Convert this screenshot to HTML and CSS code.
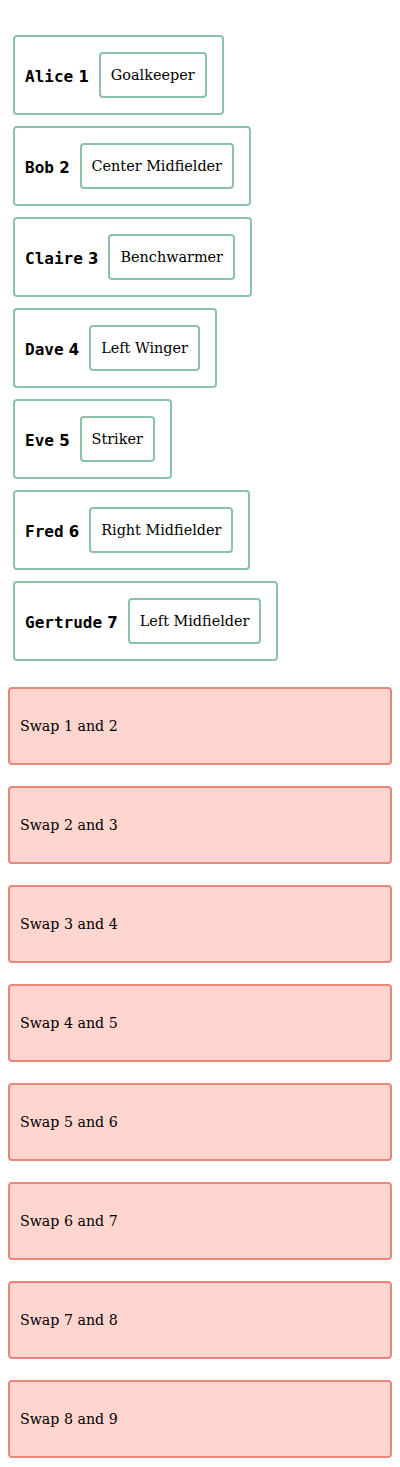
FILE: index.html
```html
<!DOCTYPE html>
<html>
<head>
<meta charset="utf-8">
<link rel="stylesheet" href="styles.css">
</head>
<body>
<div class="roster">
  <div class="card"><span class="name"><code>Alice</code> 1</span><span class="role">Goalkeeper</span></div>
  <div class="card"><span class="name"><code>Bob</code> 2</span><span class="role">Center Midfielder</span></div>
  <div class="card"><span class="name"><code>Claire</code> 3</span><span class="role">Benchwarmer</span></div>
  <div class="card"><span class="name"><code>Dave</code> 4</span><span class="role">Left Winger</span></div>
  <div class="card"><span class="name"><code>Eve</code> 5</span><span class="role">Striker</span></div>
  <div class="card"><span class="name"><code>Fred</code> 6</span><span class="role">Right Midfielder</span></div>
  <div class="card"><span class="name"><code>Gertrude</code> 7</span><span class="role">Left Midfielder</span></div>
</div>
<div class="swaps">
  <div class="swap">Swap 1 and 2</div>
  <div class="swap">Swap 2 and 3</div>
  <div class="swap">Swap 3 and 4</div>
  <div class="swap">Swap 4 and 5</div>
  <div class="swap">Swap 5 and 6</div>
  <div class="swap">Swap 6 and 7</div>
  <div class="swap">Swap 7 and 8</div>
  <div class="swap">Swap 8 and 9</div>
</div>
</body>
</html>
```
FILE: styles.css
```css
body {
  margin: 8px;
  font-family: "DejaVu Serif", serif;
  font-size: 14px;
  color: #000;
  background: #fff;
}
.roster {
  display: flex;
  flex-direction: column;
  align-items: flex-start;
  gap: 11px;
  padding: 27px 0 0 5px;
}
.card {
  display: flex;
  align-items: center;
  height: 80px;
  box-sizing: border-box;
  padding: 10px;
  border: 2px solid #8cc2a8;
  border-radius: 4px;
}
.name {
  font-family: "DejaVu Sans", sans-serif;
  font-weight: bold;
  font-size: 15px;
  padding-top: 2px;
}
.name code {
  font-family: "DejaVu Sans Mono", monospace;
  font-size: 16px;
}
.role {
  margin: 5px 5px 5px 10px;
  height: 46px;
  box-sizing: border-box;
  display: flex;
  align-items: center;
  padding: 0 10px;
  border: 2px solid #8cc2a8;
  border-radius: 4px;
  font-size: 14.4px;
}
.swaps {
  display: flex;
  flex-direction: column;
  gap: 21px;
  margin-top: 26px;
}
.swap {
  height: 78px;
  box-sizing: border-box;
  display: flex;
  align-items: center;
  padding: 0 10px;
  background: #ffd5cf;
  border: 2px solid #e9877a;
  border-radius: 4px;
  font-size: 14.2px;
}
```
